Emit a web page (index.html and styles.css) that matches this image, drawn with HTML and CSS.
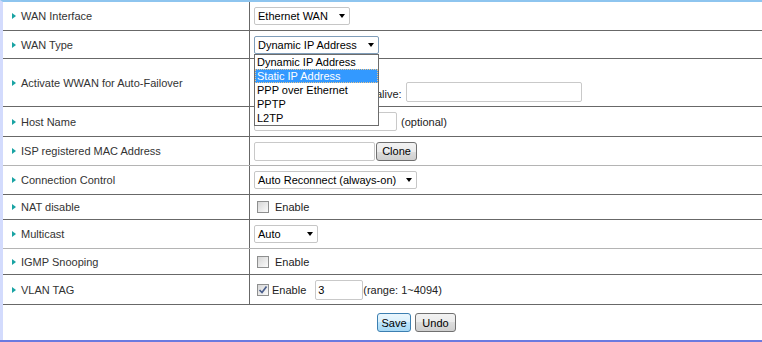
FILE: index.html
```html
<!DOCTYPE html>
<html lang="en">
<head>
  <meta charset="UTF-8" />
  <title>WAN Setup</title>
  <link rel="stylesheet" href="styles.css">
</head>
<body>
  <div class="page">
    <div class="form">
      <div class="row">
        <div class="label">WAN Interface</div>
        <div class="value"><span class="select w-iface">Ethernet WAN</span></div>
      </div>
      <div class="row row-28">
        <div class="label">WAN Type</div>
        <div class="value">
          <span class="select w-type focused">Dynamic IP Address
            <span class="options">
              <span class="option">Dynamic IP Address</span>
              <span class="option active">Static IP Address</span>
              <span class="option">PPP over Ethernet</span>
              <span class="option">PPTP</span>
              <span class="option">L2TP</span>
            </span>
          </span>
        </div>
      </div>
      <div class="row row-48">
        <div class="label">Activate WWAN for Auto-Failover</div>
        <div class="value bottom">
          <span class="keep-text">alive:</span><input class="field w-keep" type="text">
        </div>
      </div>
      <div class="row row-30">
        <div class="label">Host Name</div>
        <div class="value"><input class="field w-host" type="text"><span class="note">(optional)</span></div>
      </div>
      <div class="row light">
        <div class="label">ISP registered MAC Address</div>
        <div class="value"><input class="field w-mac" type="text"><button class="btn w-clone">Clone</button></div>
      </div>
      <div class="row">
        <div class="label">Connection Control</div>
        <div class="value"><span class="select w-conn">Auto Reconnect (always-on)</span></div>
      </div>
      <div class="row row-25">
        <div class="label">NAT disable</div>
        <div class="value"><span class="check"></span><span class="check-text">Enable</span></div>
      </div>
      <div class="row light">
        <div class="label">Multicast</div>
        <div class="value"><span class="select w-multi">Auto</span></div>
      </div>
      <div class="row row-26">
        <div class="label">IGMP Snooping</div>
        <div class="value"><span class="check"></span><span class="check-text">Enable</span></div>
      </div>
      <div class="row row-30">
        <div class="label">VLAN TAG</div>
        <div class="value">
          <span class="check checked">
            <svg width="10" height="10" viewBox="0 0 10 10"><path d="M1.5 5 L4 7.5 L8.5 1.5" fill="none" stroke="#4a5e8c" stroke-width="1.7"/></svg>
          </span>
          <span class="check-text tight">Enable</span>
          <input class="field w-vlan" type="text" value="3">
          <span>(range: 1~4094)</span>
        </div>
      </div>
    </div>
    <div class="actions">
      <button class="btn btn-save">Save</button>
      <button class="btn btn-undo">Undo</button>
    </div>
  </div>
  <div class="bottom-bar"></div>
</body>
</html>
```

FILE: styles.css
```css
body {
  margin: 0;
  font-family: "Liberation Sans", Arial, sans-serif;
  font-size: 11px;
  color: #222;
  background: #fff;
  overflow: hidden;
}
.page {
  height: 340px;
  box-sizing: border-box;
  border-left: 3px solid #d3dbfd;
  border-top: 2px solid #8ec5ef;
}
.bottom-bar {
  height: 2px;
  background: #6b7ae0;
}
.row {
  display: grid;
  grid-template-columns: 247px 1fr;
  height: 29px;
  box-sizing: border-box;
  border-bottom: 1px solid #686868;
}
.row.light { border-bottom-color: #b4b4b4; }
.row-25 { height: 25px; }
.row-26 { height: 26px; }
.row-28 { height: 28px; }
.row-30 { height: 30px; }
.row-48 { height: 48px; }
.label {
  display: flex;
  align-items: center;
  padding-left: 9px;
  border-right: 1px solid #686868;
  color: #333;
}
.label::before {
  content: "";
  border-left: 4px solid #19a3a3;
  border-top: 3px solid transparent;
  border-bottom: 3px solid transparent;
  margin-right: 5px;
}
.value {
  display: flex;
  align-items: center;
  padding-left: 4px;
}
.value.bottom {
  align-items: flex-end;
  padding-bottom: 4px;
}
.keep-text {
  margin-left: 122px;
  line-height: 16px;
}

.select {
  position: relative;
  display: inline-flex;
  align-items: center;
  box-sizing: border-box;
  height: 18px;
  padding-left: 3px;
  border: 1px solid #c6c6c6;
  border-radius: 2px;
  background: #fff;
  color: #000;
  white-space: nowrap;
}
.select::after {
  content: "";
  position: absolute;
  right: 4px;
  top: 6px;
  border-left: 3.5px solid transparent;
  border-right: 3.5px solid transparent;
  border-top: 4px solid #000;
}
.select.focused { border-color: #7f9db9; }
.w-iface { width: 96px; }
.w-type { width: 125px; }
.w-conn { width: 163px; }
.w-multi { width: 64px; }

.options {
  position: absolute;
  left: -1px;
  top: 17px;
  z-index: 2;
  width: 125px;
  box-sizing: border-box;
  border: 1px solid #6c6c6c;
  background: #fff;
  display: flex;
  flex-direction: column;
}
.option {
  height: 14px;
  line-height: 14px;
  padding-left: 2px;
  color: #000;
}
.option.active {
  background: #3399ff;
  color: #fff;
  outline: 1px dotted #e8c48c;
  outline-offset: -1px;
}

.field {
  box-sizing: border-box;
  height: 19px;
  margin: 0;
  padding: 0 3px;
  border: 1px solid #c9c9c9;
  border-radius: 2px;
  font-family: inherit;
  font-size: 11px;
  color: #000;
}
.w-keep { width: 176px; height: 20px; margin-left: 4px; }
.w-host { width: 143px; }
.w-mac { width: 121px; }
.w-vlan { width: 48px; height: 20px; margin-left: 9px; padding-left: 2px; }
.note { margin-left: 4px; }

.check {
  display: inline-flex;
  align-items: center;
  justify-content: center;
  box-sizing: border-box;
  width: 12px;
  height: 12px;
  margin-left: 3px;
  border: 1px solid #8e8f8f;
  background: linear-gradient(135deg, #d6d6d6, #fbfbfb);
}
.check-text { margin-left: 6px; }
.check-text.tight { margin-left: 3px; }

.btn {
  box-sizing: border-box;
  height: 19px;
  margin: 0;
  padding: 0;
  border: 1px solid #707070;
  border-radius: 3px;
  background: linear-gradient(#f2f2f2, #ebebeb 50%, #dddddd 50%, #cfcfcf);
  font-family: inherit;
  font-size: 11px;
  color: #000;
}
.w-clone { width: 41px; margin-left: 1px; }
.actions {
  display: flex;
  gap: 4px;
  padding: 8px 0 0 374px;
}
.btn-save {
  width: 34px;
  border-color: #3c7fb1;
  background: linear-gradient(#eaf6fd, #d9f0fc 50%, #bee6fd 50%, #a7d9f5);
}
.btn-undo { width: 41px; }
```
